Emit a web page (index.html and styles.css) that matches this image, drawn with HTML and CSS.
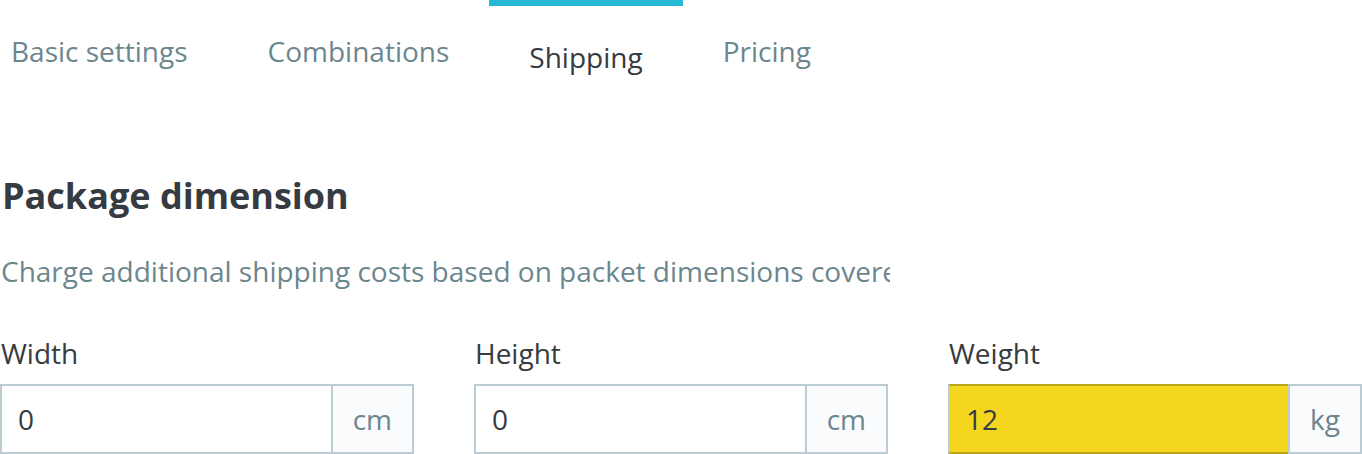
FILE: index.html
```html
<!DOCTYPE html>
<html lang="en">
<head>
<meta charset="utf-8">
<title>Shipping</title>
<link rel="stylesheet" href="styles.css">
</head>
<body>
<div class="page">
  <nav class="tabs">
    <a class="tab">Basic settings</a>
    <a class="tab">Combinations</a>
    <a class="tab active">Shipping</a>
    <a class="tab">Pricing</a>
  </nav>
  <section class="section">
    <h2 class="title">Package dimension</h2>
    <p class="desc">Charge additional shipping costs based on packet dimensions covered here.</p>
    <div class="fields">
      <div class="field">
        <label class="label">Width</label>
        <div class="group">
          <div class="input">0</div>
          <div class="addon">cm</div>
        </div>
      </div>
      <div class="field">
        <label class="label">Height</label>
        <div class="group">
          <div class="input">0</div>
          <div class="addon">cm</div>
        </div>
      </div>
      <div class="field">
        <label class="label">Weight</label>
        <div class="group">
          <div class="input highlight">12</div>
          <div class="addon">kg</div>
        </div>
      </div>
    </div>
  </section>
</div>
</body>
</html>
```
FILE: styles.css
```css
* { box-sizing: border-box; }
html, body { margin: 0; padding: 0; background: #fff; }
body {
  font-family: "Open Sans", "Noto Sans", sans-serif;
  color: #363a41;
  width: 1362px;
  height: 454px;
  overflow: hidden;
}
.page { width: 1362px; }
.tabs {
  display: flex;
  align-items: flex-start;
  margin-left: -29px;
  height: 77px;
}
.tab {
  padding: 31px 40px 0;
  font-size: 28px;
  line-height: 40px;
  color: #6c868e;
  white-space: nowrap;
}
.tab.active {
  color: #363a41;
  border-top: 6px solid #25b9d7;
}
.section { padding-top: 94px; }
.title {
  margin: 0 0 0 2px;
  font-size: 36px;
  font-weight: 700;
  line-height: 50px;
  color: #363a41;
}
.desc {
  margin: 30px 0 0 1px;
  width: 889px;
  overflow: hidden;
  white-space: nowrap;
  font-size: 28px;
  line-height: 40px;
  color: #6c868e;
}
.fields {
  display: flex;
  gap: 60px;
  margin-top: 42px;
}
.field { width: 414px; flex: none; }
.label {
  display: block;
  margin: 0 0 11px 1px;
  font-size: 28px;
  line-height: 40px;
  color: #363a41;
}
.group {
  display: flex;
  height: 70px;
}
.input {
  flex: 1;
  border: 2px solid #bbcdd2;
  border-right: none;
  padding: 0 16px;
  font-size: 28px;
  line-height: 66px;
  color: #363a41;
  background: #fff;
}
.input.highlight {
  background: #f4d61f;
  border-top-color: #bca619;
  border-bottom-color: #bca619;
}
.addon {
  flex: none;
  padding: 0 20px;
  border: 2px solid #bbcdd2;
  background: #fafbfc;
  color: #6c868e;
  font-size: 28px;
  line-height: 66px;
  text-align: center;
}
```
